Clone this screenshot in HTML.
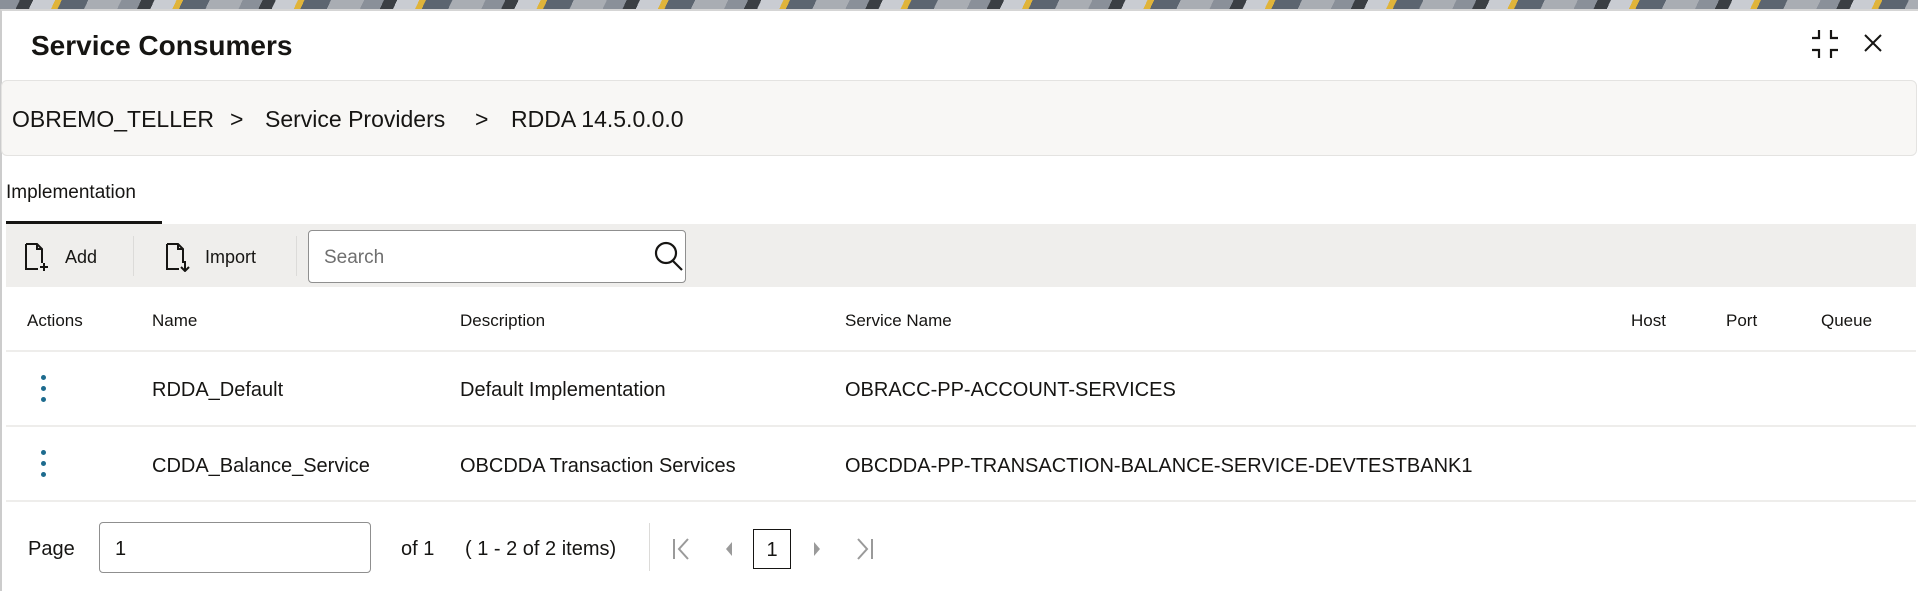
<!DOCTYPE html>
<html><head><meta charset="utf-8"><style>
*{box-sizing:border-box;margin:0;padding:0}
body{width:1918px;height:591px;overflow:hidden;background:#fff;font-family:"Liberation Sans",sans-serif;color:#161513;position:relative}
.banner{position:absolute;left:0;top:0;width:1918px;height:10px;background:repeating-linear-gradient(115deg,#8a9099 0 18px,#3b3f44 18px 30px,#c9ccd2 30px 50px,#e0b43a 50px 56px,#5c6570 56px 80px,#a9adb3 80px 110px)}
.dlg{position:absolute;left:0;top:9px;width:1918px;height:582px;background:#fff;border-left:2px solid #ccc;border-top:2px solid #d5d5d5}
.abs{position:absolute;white-space:nowrap}
.title{left:31px;top:30px;font-size:28px;font-weight:bold}
.bc{position:absolute;left:1px;top:80px;width:1916px;height:76px;background:#f8f7f5;border:1px solid #e4e3e1;border-radius:6px}
.bct{font-size:23px;top:106px}
.tab{left:6px;top:182px;font-size:19px}
.uline{position:absolute;left:6px;top:221px;width:156px;height:3px;background:#161513}
.tb{position:absolute;left:6px;top:224px;width:1910px;height:63px;background:#efeeec}
.sep{position:absolute;top:236px;width:1px;height:40px;background:#dcdbd9}
.search{position:absolute;left:308px;top:230px;width:378px;height:53px;border:1px solid #8f8f8f;border-radius:4px;background:#fff}
.th{font-size:17px;top:311px}
.td{font-size:20px}
.hr{position:absolute;left:6px;width:1910px;height:2px;background:#eeedeb}
.kb{position:absolute;left:41px;width:5px}
.kb i{display:block;width:5px;height:5px;border-radius:50%;background:#1d6b8e;margin-bottom:6px}
</style></head><body>
<div class="banner"></div>
<div class="dlg"></div>
<div class="abs title">Service Consumers</div>
<svg class="abs" style="left:1810px;top:28px" width="30" height="32" viewBox="0 0 30 32" fill="none" stroke="#161513" stroke-width="2.2"><path d="M9 2v8H2M21 2v8h7M2 22h7v8M28 22h-7v8"/></svg>
<svg class="abs" style="left:1864px;top:34px" width="18" height="18" viewBox="0 0 18 18" stroke="#161513" stroke-width="2"><path d="M1 1l16 16M17 1L1 17"/></svg>
<div class="bc"></div>
<div class="abs bct" style="left:12px">OBREMO_TELLER</div>
<div class="abs bct" style="left:230px">&gt;</div>
<div class="abs bct" style="left:265px">Service Providers</div>
<div class="abs bct" style="left:475px">&gt;</div>
<div class="abs bct" style="left:511px">RDDA 14.5.0.0.0</div>
<div class="abs tab">Implementation</div>
<div class="uline"></div>
<div class="tb"></div>
<svg class="abs" style="left:24px;top:242px" width="28" height="30" viewBox="0 0 28 30" fill="none" stroke="#161513" stroke-width="2"><path d="M2 2h11l5 5v14M2 2v25h12"/><path d="M13 2v5h5"/><path d="M20 21v8M16 25h8"/></svg>
<div class="abs" style="left:65px;top:247px;font-size:18px">Add</div>
<div class="sep" style="left:133px"></div>
<svg class="abs" style="left:165px;top:242px" width="28" height="30" viewBox="0 0 28 30" fill="none" stroke="#161513" stroke-width="2"><path d="M2 2h11l5 5v14M2 2v25h12"/><path d="M13 2v5h5"/><path d="M20 19v10M16 25l4 4 4-4"/></svg>
<div class="abs" style="left:205px;top:247px;font-size:18px">Import</div>
<div class="sep" style="left:296px"></div>
<div class="search"></div>
<div class="abs" style="left:324px;top:247px;font-size:19px;color:#6f6f6f">Search</div>
<svg class="abs" style="left:653px;top:240px" width="32" height="32" viewBox="0 0 32 32" fill="none" stroke="#161513" stroke-width="2.2"><circle cx="13" cy="13" r="10"/><path d="M20 21l9 9"/></svg>
<div class="abs th" style="left:27px">Actions</div>
<div class="abs th" style="left:152px">Name</div>
<div class="abs th" style="left:460px">Description</div>
<div class="abs th" style="left:845px">Service Name</div>
<div class="abs th" style="left:1631px">Host</div>
<div class="abs th" style="left:1726px">Port</div>
<div class="abs th" style="left:1821px">Queue</div>
<div class="hr" style="top:350px"></div>
<div class="kb" style="top:375px"><i></i><i></i><i></i></div>
<div class="abs td" style="left:152px;top:379px">RDDA_Default</div>
<div class="abs td" style="left:460px;top:379px">Default Implementation</div>
<div class="abs td" style="left:845px;top:379px">OBRACC-PP-ACCOUNT-SERVICES</div>
<div class="hr" style="top:425px"></div>
<div class="kb" style="top:450px"><i></i><i></i><i></i></div>
<div class="abs td" style="left:152px;top:455px">CDDA_Balance_Service</div>
<div class="abs td" style="left:460px;top:455px">OBCDDA Transaction Services</div>
<div class="abs td" style="left:845px;top:455px">OBCDDA-PP-TRANSACTION-BALANCE-SERVICE-DEVTESTBANK1</div>
<div class="hr" style="top:500px"></div>
<div class="abs" style="left:28px;top:538px;font-size:20px">Page</div>
<div class="abs" style="left:99px;top:522px;width:272px;height:51px;border:1px solid #8f8f8f;border-radius:4px"></div>
<div class="abs" style="left:115px;top:538px;font-size:20px">1</div>
<div class="abs" style="left:401px;top:538px;font-size:20px">of 1</div>
<div class="abs" style="left:465px;top:538px;font-size:20px">( 1 - 2 of 2 items)</div>
<div class="abs" style="left:649px;top:523px;width:1px;height:48px;background:#dcdbd9"></div>
<svg class="abs" style="left:672px;top:538px" width="20" height="22" viewBox="0 0 20 22" fill="none" stroke="#9a9a9a" stroke-width="2"><path d="M2 1v20M16 1L7 11l9 10"/></svg>
<svg class="abs" style="left:724px;top:540px" width="10" height="18" viewBox="0 0 10 18" fill="#9a9a9a"><path d="M8 2L2 9l6 7z"/></svg>
<div class="abs" style="left:753px;top:529px;width:38px;height:40px;border:1.5px solid #161513;font-size:20px;text-align:center;line-height:40px">1</div>
<svg class="abs" style="left:812px;top:540px" width="10" height="18" viewBox="0 0 10 18" fill="#9a9a9a"><path d="M2 2l6 7-6 7z"/></svg>
<svg class="abs" style="left:854px;top:538px" width="20" height="22" viewBox="0 0 20 22" fill="none" stroke="#9a9a9a" stroke-width="2"><path d="M18 1v20M4 1l9 10-9 10"/></svg>
</body></html>
